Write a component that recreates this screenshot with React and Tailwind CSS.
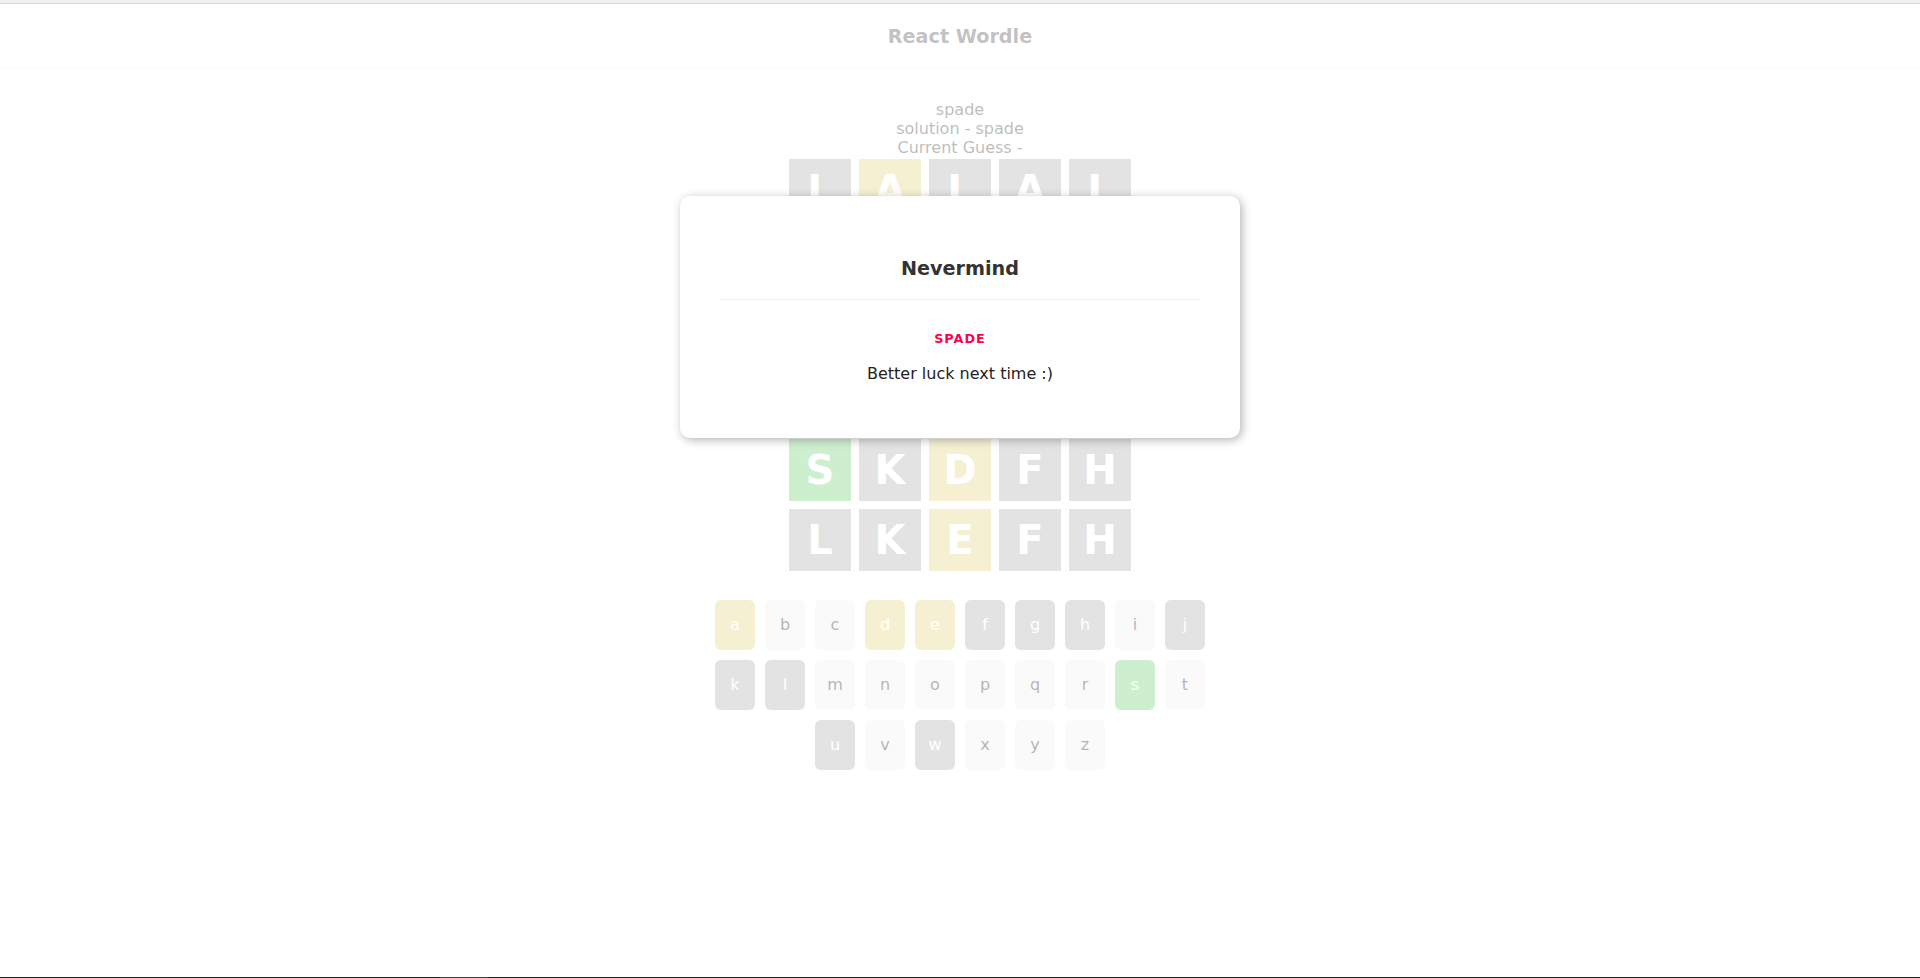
import React from "react";

const colors = {
  green: "bg-[#5ac85a] border-[#5ac85a]",
  yellow: "bg-[#e2cc68] border-[#e2cc68]",
  grey: "bg-[#a1a1a1] border-[#a1a1a1]",
};

// past guesses, already coloured
const guesses = [
  [["l", "grey"], ["a", "yellow"], ["l", "grey"], ["a", "grey"], ["l", "grey"]],
  [["w", "grey"], ["u", "grey"], ["g", "grey"], ["h", "grey"], ["j", "grey"]],
  [["f", "grey"], ["u", "grey"], ["g", "grey"], ["j", "grey"], ["w", "grey"]],
  [["h", "grey"], ["e", "yellow"], ["w", "grey"], ["g", "grey"], ["u", "grey"]],
  [["s", "green"], ["k", "grey"], ["d", "yellow"], ["f", "grey"], ["h", "grey"]],
  [["l", "grey"], ["k", "grey"], ["e", "yellow"], ["f", "grey"], ["h", "grey"]],
];

const usedKeys = {
  a: "yellow",
  d: "yellow",
  e: "yellow",
  s: "green",
  f: "grey",
  g: "grey",
  h: "grey",
  j: "grey",
  k: "grey",
  l: "grey",
  u: "grey",
  w: "grey",
};

const letters = "abcdefghijklmnopqrstuvwxyz".split("");

const Grid = () => (
  <div>
    {guesses.map((row, i) => (
      <div key={i} className="flex justify-center">
        {row.map(([letter, color], j) => (
          <div
            key={j}
            className={`w-[62px] h-[62px] m-[4px] border text-center leading-[60px] text-[40px] font-bold uppercase text-white ${colors[color]}`}
          >
            {letter}
          </div>
        ))}
      </div>
    ))}
  </div>
);

const Keypad = () => (
  <div className="max-w-[500px] mx-auto my-5 flex flex-wrap justify-center">
    {letters.map((l) => {
      const c = usedKeys[l];
      return (
        <div
          key={l}
          className={`w-10 h-[50px] m-[5px] rounded-[6px] text-center leading-[50px] text-[16px] ${
            c ? colors[c] + " text-white" : "bg-[#eee] text-black"
          }`}
        >
          {l}
        </div>
      );
    })}
  </div>
);

const Modal = ({ solution }) => (
  <div className="absolute inset-0 bg-white/70">
    <div className="max-w-[480px] box-content mx-auto mt-[192px] bg-white p-10 rounded-[10px] shadow-[2px_2px_10px_rgba(0,0,0,0.3)] text-center">
      <h1 className="pt-[21px] pb-[19px] leading-[23px] text-[19.2px] font-bold text-[#333] border-b border-[#eee] mb-[30px]">
        Nevermind
      </h1>
      <p className="text-[12.8px] leading-[17px] font-bold uppercase tracking-[1px] text-[#ff004c]">
        {solution}
      </p>
      <p className="pt-[17px] pb-[15px] text-[16px] leading-[19px] text-[#222]">
        Better luck next time :)
      </p>
    </div>
  </div>
);

export default function App() {
  const solution = "spade";
  return (
    <div className="h-[978px] flex flex-col bg-white font-['DejaVu_Sans',sans-serif] overflow-hidden">
      <div className="h-[3px] bg-[#efefef]" />
      <div className="h-px bg-[#dadada]" />
      <div className="relative flex-1 text-center">
        <h1 className="pt-[21px] pb-[19px] leading-[23px] text-[19.2px] font-bold text-[#333] border-b border-[#eee] mb-[30px]">
          React Wordle
        </h1>
        <div className="h-[57px] pt-[1.5px] text-[16px] leading-[19px] text-[#222]">
          <div>{solution}</div>
          <div>solution - {solution}</div>
          <div>Current Guess - </div>
        </div>
        <Grid />
        <Keypad />
        <Modal solution={solution} />
      </div>
      <div className="h-px bg-[#1c211e] flex">
        <div className="ml-[440px] w-[48px] bg-[#3b403d]" />
      </div>
    </div>
  );
}
